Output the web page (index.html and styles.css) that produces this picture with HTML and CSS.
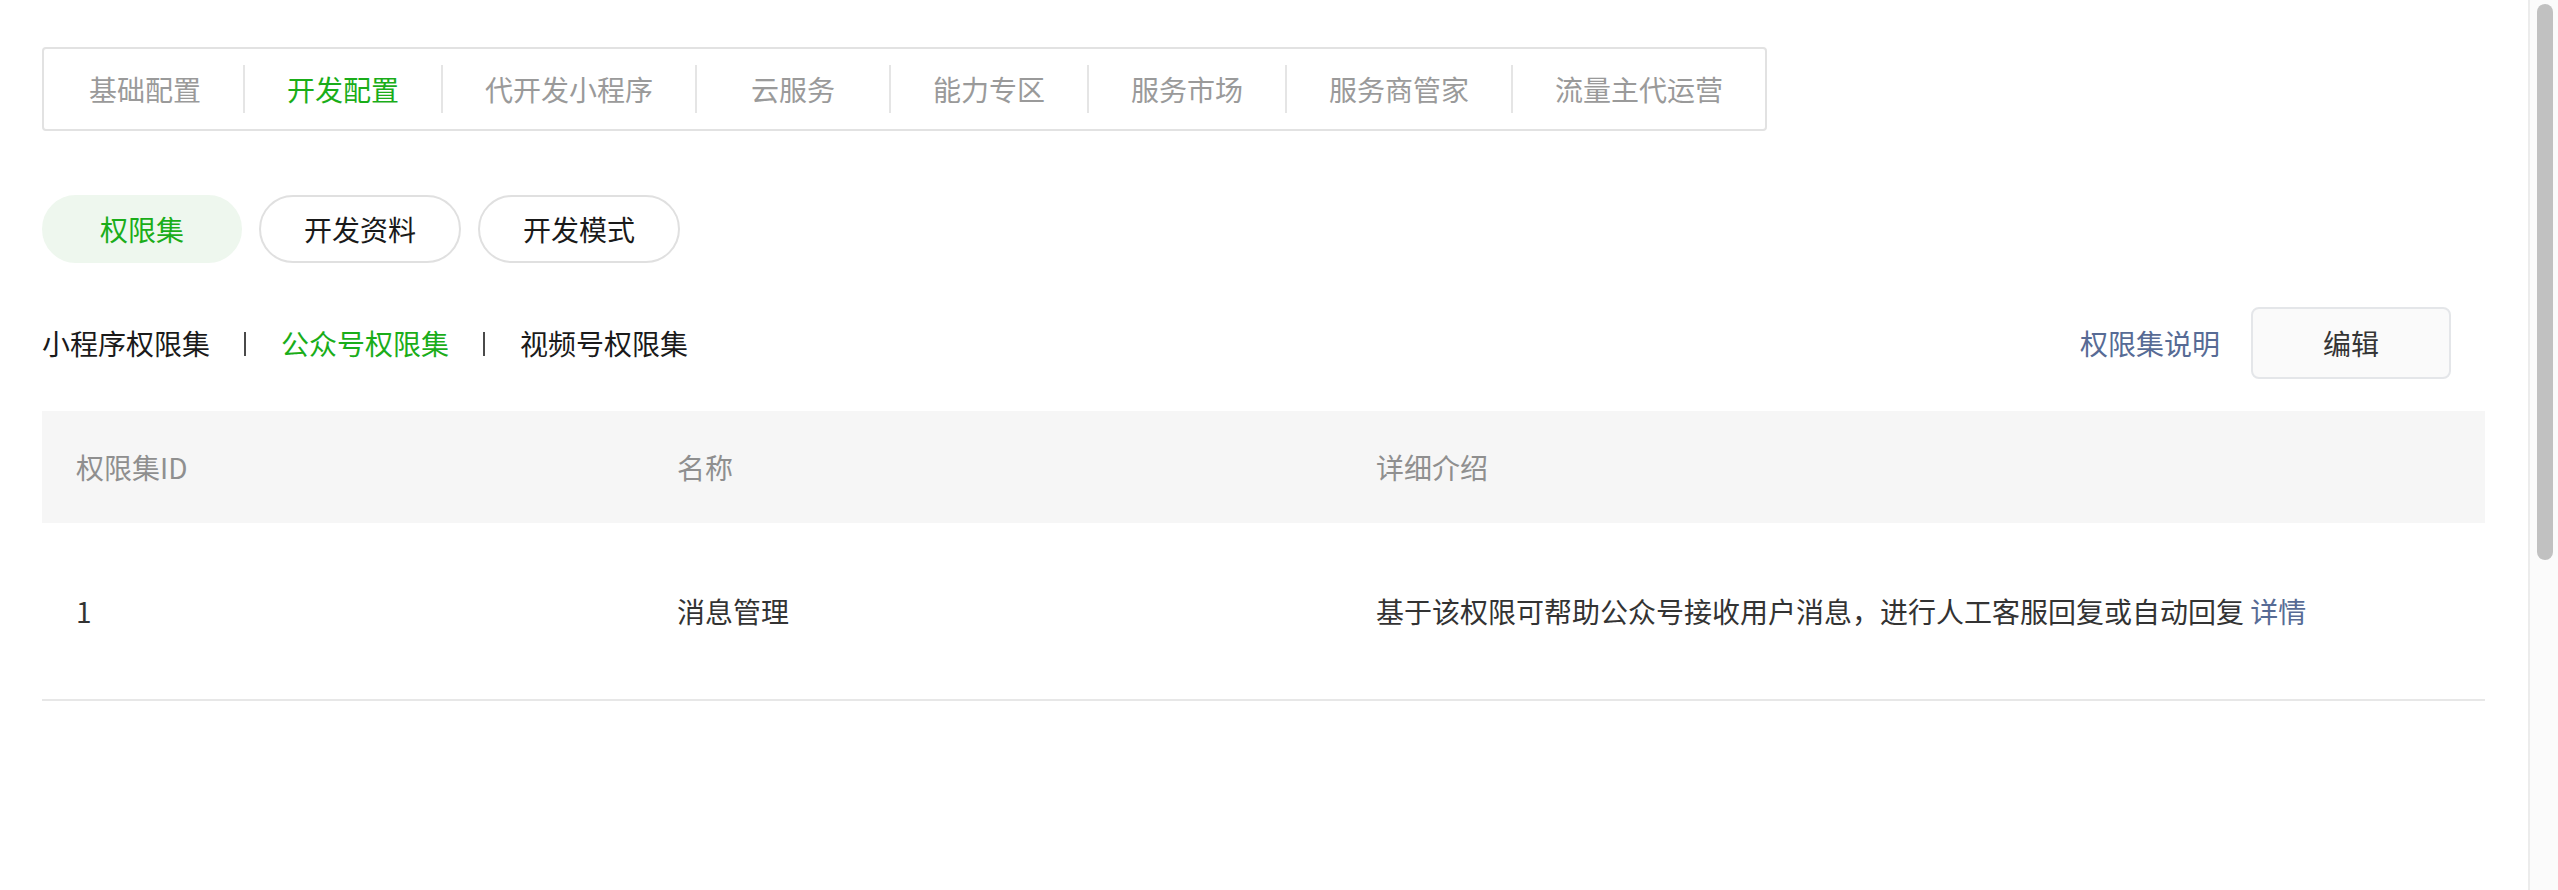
FILE: index.html
```html
<!DOCTYPE html>
<html lang="zh-CN">
<head>
<meta charset="utf-8">
<title>开发配置 - 权限集</title>
<link rel="stylesheet" href="styles.css">
</head>
<body>
<div class="page">
  <main class="main">
    <nav class="tabs">
      <span class="tab">基础配置</span><i class="tab-div"></i>
      <span class="tab tab-active">开发配置</span><i class="tab-div"></i>
      <span class="tab">代开发小程序</span><i class="tab-div"></i>
      <span class="tab">云服务</span><i class="tab-div"></i>
      <span class="tab">能力专区</span><i class="tab-div"></i>
      <span class="tab">服务市场</span><i class="tab-div"></i>
      <span class="tab">服务商管家</span><i class="tab-div"></i>
      <span class="tab">流量主代运营</span>
    </nav>

    <div class="pills">
      <span class="pill pill-active">权限集</span>
      <span class="pill">开发资料</span>
      <span class="pill">开发模式</span>
    </div>

    <div class="toolbar">
      <div class="subtabs">
        <span class="subtab">小程序权限集</span>
        <i class="sub-div"></i>
        <span class="subtab subtab-active">公众号权限集</span>
        <i class="sub-div"></i>
        <span class="subtab">视频号权限集</span>
      </div>
      <div class="actions">
        <a class="link">权限集说明</a>
        <span class="btn">编辑</span>
      </div>
    </div>

    <div class="table">
      <div class="thead">
        <div class="cell">权限集ID</div>
        <div class="cell">名称</div>
        <div class="cell">详细介绍</div>
      </div>
      <div class="trow">
        <div class="cell">1</div>
        <div class="cell">消息管理</div>
        <div class="cell">基于该权限可帮助公众号接收用户消息，进行人工客服回复或自动回复 <a class="link">详情</a></div>
      </div>
    </div>
  </main>
  <aside class="scrollbar"><div class="thumb"></div></aside>
</div>
</body>
</html>
```

FILE: styles.css
```css
html, body {
  margin: 0;
  padding: 0;
  background: #ffffff;
}
body {
  font-family: "Noto Sans CJK SC", "Noto Sans", sans-serif;
  color: #1a1a1a;
}
.page {
  display: flex;
  height: 890px;
  overflow: hidden;
}
.main {
  flex: 1;
  padding: 47px 43px 0 42px;
  min-width: 0;
}
.tabs {
  display: inline-flex;
  align-items: center;
  box-sizing: border-box;
  height: 84px;
  padding-left: 3px;
  border: 2px solid #e2e2e2;
  border-radius: 4px;
}
.tab {
  box-sizing: border-box;
  min-width: 192px;
  padding: 0 42px;
  font-size: 28px;
  line-height: 40px;
  color: #9a9a9a;
  text-align: center;
  white-space: nowrap;
}
.tab-active {
  color: #1aad19;
}
.tab-div {
  display: block;
  width: 2px;
  height: 48px;
  background: #e5e5e5;
}
.pills {
  display: flex;
  gap: 17px;
  margin-top: 64px;
}
.pill {
  box-sizing: border-box;
  width: 202px;
  height: 68px;
  border: 2px solid #e0e0e0;
  border-radius: 34px;
  display: flex;
  align-items: center;
  justify-content: center;
  font-size: 28px;
  color: #1a1a1a;
}
.pill-active {
  width: 200px;
  background: #eef7ee;
  border-color: #eef7ee;
  color: #1aad19;
}
.toolbar {
  display: flex;
  align-items: center;
  justify-content: space-between;
  height: 72px;
  margin-top: 44px;
  padding-right: 34px;
}
.subtabs {
  display: flex;
  align-items: center;
}
.subtab {
  font-size: 28px;
  line-height: 40px;
  color: #1a1a1a;
}
.subtab-active {
  color: #1aad19;
}
.sub-div {
  display: block;
  width: 2px;
  height: 24px;
  margin: 2px 35px 0 34px;
  background: #4a4a4a;
}
.actions {
  display: flex;
  align-items: center;
  gap: 31px;
}
.link {
  color: #576b95;
  font-size: 28px;
  text-decoration: none;
}
.btn {
  box-sizing: border-box;
  width: 200px;
  height: 72px;
  border: 2px solid #e4e6e9;
  border-radius: 8px;
  background: #fafafa;
  display: flex;
  align-items: center;
  justify-content: center;
  font-size: 28px;
  color: #353535;
}
.table {
  margin-top: 32px;
}
.thead, .trow {
  display: grid;
  grid-template-columns: 601px 699px 1fr;
  align-items: center;
}
.thead {
  height: 112px;
  background: #f6f6f6;
  color: #8f8f8f;
}
.trow {
  height: 176px;
  border-bottom: 2px solid #e7e7e7;
  color: #333333;
}
.cell {
  padding-left: 34px;
  font-size: 28px;
  line-height: 40px;
  white-space: nowrap;
}
.scrollbar {
  box-sizing: border-box;
  flex: 0 0 30px;
  border-left: 2px solid #ececec;
  background: #fbfbfb;
  padding: 4px 5px 0 7px;
}
.thumb {
  width: 16px;
  height: 556px;
  border-radius: 8px;
  background: #c1c1c1;
}
```
